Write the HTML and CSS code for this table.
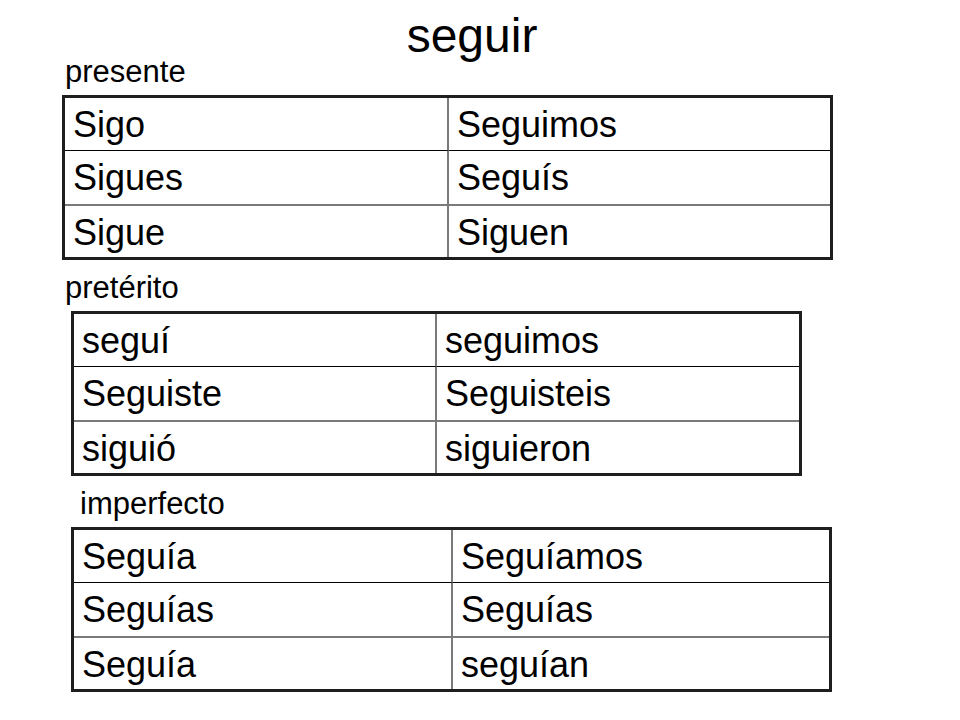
FILE: index.html
```html
<!DOCTYPE html>
<html lang="es">
<head>
<meta charset="utf-8">
<title>seguir</title>
<link rel="stylesheet" href="styles.css">
</head>
<body>
<main class="slide">
  <h1 class="title">seguir</h1>

  <section class="tense">
    <p class="tense-label label-presente">presente</p>
    <div class="conj conj-presente">
      <div class="cell left r1">Sigo</div>
      <div class="cell r1">Seguimos</div>
      <div class="cell left r2">Sigues</div>
      <div class="cell r2">Seguís</div>
      <div class="cell left">Sigue</div>
      <div class="cell">Siguen</div>
    </div>
  </section>

  <section class="tense">
    <p class="tense-label label-preterito">pretérito</p>
    <div class="conj conj-preterito">
      <div class="cell left r1">seguí</div>
      <div class="cell r1">seguimos</div>
      <div class="cell left r2">Seguiste</div>
      <div class="cell r2">Seguisteis</div>
      <div class="cell left">siguió</div>
      <div class="cell">siguieron</div>
    </div>
  </section>

  <section class="tense">
    <p class="tense-label label-imperfecto">imperfecto</p>
    <div class="conj conj-imperfecto">
      <div class="cell left r1">Seguía</div>
      <div class="cell r1">Seguíamos</div>
      <div class="cell left r2">Seguías</div>
      <div class="cell r2">Seguías</div>
      <div class="cell left">Seguía</div>
      <div class="cell">seguían</div>
    </div>
  </section>
</main>
</body>
</html>
```
FILE: styles.css
```css
html, body {
  margin: 0;
  padding: 0;
  background: #ffffff;
}

body {
  font-family: "Liberation Sans", Arial, sans-serif;
  color: #000000;
}

.slide {
  width: 960px;
  height: 720px;
  padding-top: 16px;
  box-sizing: border-box;
  overflow: hidden;
}

.title {
  margin: 0;
  padding-right: 16px;
  font-size: 48px;
  line-height: 40px;
  font-weight: normal;
  text-align: center;
}

.tense {
  margin-top: 12px;
}

.tense:first-of-type {
  margin-top: 0;
}

.tense-label {
  margin: 0 0 8px 0;
  font-size: 31px;
  line-height: 31px;
}

.label-presente { margin-left: 65px; }
.label-preterito { margin-left: 65px; }
.label-imperfecto { margin-left: 80px; }

.conj {
  display: grid;
  grid-template-rows: 53px 55px 51px;
  border: 3px solid #1e1e1e;
  box-sizing: border-box;
  height: 165px;
}

.conj-presente {
  margin-left: 62px;
  width: 771px;
  grid-template-columns: 384px 1fr;
}

.conj-preterito {
  margin-left: 71px;
  width: 731px;
  grid-template-columns: 363px 1fr;
}

.conj-imperfecto {
  margin-left: 71px;
  width: 761px;
  grid-template-columns: 379px 1fr;
}

.cell {
  box-sizing: border-box;
  padding: 6px 8px 0 8px;
  font-size: 36px;
  line-height: 41px;
  white-space: nowrap;
}

.cell.left {
  border-right: 2px solid #7a7a7a;
}

.cell.r1 {
  border-bottom: 1px solid #000000;
}

.cell.r2 {
  border-bottom: 2px solid #7a7a7a;
}
```
